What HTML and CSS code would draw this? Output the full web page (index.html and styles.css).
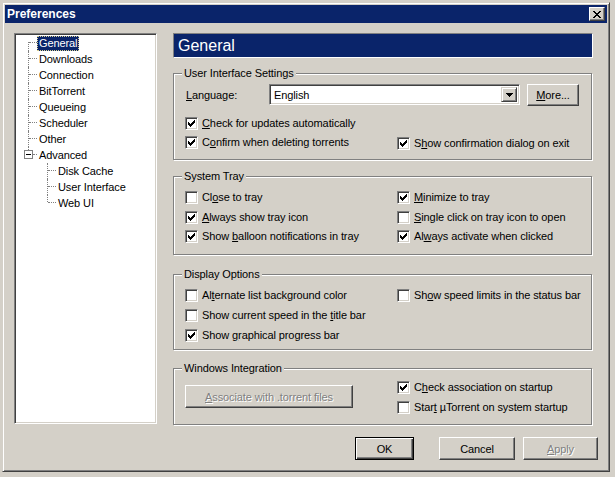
FILE: index.html
```html
<!DOCTYPE html>
<html>
<head>
<meta charset="utf-8">
<title>Preferences</title>
<link rel="stylesheet" href="styles.css">
</head>
<body>
<svg class="defs" aria-hidden="true">
  <defs>
    <symbol id="chk" viewBox="0 0 7 7"><path d="M6 0h1v1h-1z M5 1h2v1h-2z M0 2h1v1h-1z M4 2h3v1h-3z M0 3h2v1h-2z M3 3h3v1h-3z M0 4h5v1h-5z M1 5h3v1h-3z M2 6h1v1h-1z"/></symbol>
  </defs>
</svg>
<div class="window">
  <div class="titlebar">
    <span class="title">Preferences</span>
    <span class="close"><svg width="8" height="7" viewBox="0 0 8 7" shape-rendering="crispEdges"><path d="M0 0h2v1h-2z M6 0h2v1h-2z M1 1h2v1h-2z M5 1h2v1h-2z M2 2h4v1h-4z M3 3h2v1h-2z M2 4h4v1h-4z M1 5h2v1h-2z M5 5h2v1h-2z M0 6h2v1h-2z M6 6h2v1h-2z"/></svg></span>
  </div>
  <div class="dlg">
    <div class="main">
      <div class="tree">
        <ul>
          <li class="root first sel"><span class="lbl">General</span></li>
          <li class="root"><span class="lbl">Downloads</span></li>
          <li class="root"><span class="lbl">Connection</span></li>
          <li class="root"><span class="lbl">BitTorrent</span></li>
          <li class="root"><span class="lbl">Queueing</span></li>
          <li class="root"><span class="lbl">Scheduler</span></li>
          <li class="root"><span class="lbl">Other</span></li>
          <li class="root last adv"><span class="expander"><span class="minus"></span></span><span class="lbl">Advanced</span></li>
          <li class="child"><span class="lbl">Disk Cache</span></li>
          <li class="child"><span class="lbl">User Interface</span></li>
          <li class="child last"><span class="lbl">Web UI</span></li>
        </ul>
      </div>
      <div class="pane">
        <div class="header">General</div>

        <div class="group g1">
          <div class="legend">User Interface Settings</div>
          <div class="lang-row">
            <span class="lang-label"><u>L</u>anguage:</span>
            <div class="combo">
              <span class="combo-text">English</span>
              <span class="combo-btn"><svg width="7" height="4" viewBox="0 0 7 4" shape-rendering="crispEdges"><path d="M0 0H7V1H6V2H5V3H4V4H3V3H2V2H1V1H0Z"/></svg></span>
            </div>
            <span class="btn more"><u>M</u>ore...</span>
          </div>
          <div class="opts">
            <label class="opt"><span class="cb"><svg class="ck"><use href="#chk"/></svg></span><span class="t"><u>C</u>heck for updates automatically</span></label>
            <span></span>
            <label class="opt"><span class="cb"><svg class="ck"><use href="#chk"/></svg></span><span class="t">C<u>o</u>nfirm when deleting torrents</span></label>
            <label class="opt nudge"><span class="cb"><svg class="ck"><use href="#chk"/></svg></span><span class="t">S<u>h</u>ow confirmation dialog on exit</span></label>
          </div>
        </div>

        <div class="group g2">
          <div class="legend">System Tray</div>
          <div class="opts">
            <label class="opt"><span class="cb"></span><span class="t">Cl<u>o</u>se to tray</span></label>
            <label class="opt"><span class="cb"><svg class="ck"><use href="#chk"/></svg></span><span class="t"><u>M</u>inimize to tray</span></label>
            <label class="opt"><span class="cb"><svg class="ck"><use href="#chk"/></svg></span><span class="t"><u>A</u>lways show tray icon</span></label>
            <label class="opt"><span class="cb"></span><span class="t"><u>S</u>ingle click on tray icon to open</span></label>
            <label class="opt"><span class="cb"><svg class="ck"><use href="#chk"/></svg></span><span class="t">Show <u>b</u>alloon notifications in tray</span></label>
            <label class="opt"><span class="cb"><svg class="ck"><use href="#chk"/></svg></span><span class="t">Al<u>w</u>ays activate when clicked</span></label>
          </div>
        </div>

        <div class="group g3">
          <div class="legend">Display Options</div>
          <div class="opts">
            <label class="opt"><span class="cb"></span><span class="t">Al<u>t</u>ernate list background color</span></label>
            <label class="opt"><span class="cb"></span><span class="t">Sh<u>o</u>w speed limits in the status bar</span></label>
            <label class="opt"><span class="cb"></span><span class="t">Show current speed in the <u>t</u>itle bar</span></label>
            <span></span>
            <label class="opt"><span class="cb"><svg class="ck"><use href="#chk"/></svg></span><span class="t">Show <u>g</u>raphical progress bar</span></label>
            <span></span>
          </div>
        </div>

        <div class="group g4">
          <div class="legend">Windows Integration</div>
          <div class="opts">
            <div class="assoc-cell"><span class="btn assoc disabled"><u>A</u>ssociate with .torrent files</span></div>
            <div class="stack">
              <label class="opt"><span class="cb"><svg class="ck"><use href="#chk"/></svg></span><span class="t">C<u>h</u>eck association on startup</span></label>
              <label class="opt"><span class="cb"></span><span class="t">Star<u>t</u> µTorrent on system startup</span></label>
            </div>
          </div>
        </div>
      </div>
    </div>
    <div class="buttons">
      <span class="btn default ok">OK</span>
      <span class="btn cancel">Cancel</span>
      <span class="btn apply disabled"><u>A</u>pply</span>
    </div>
  </div>
</div>
</body>
</html>
```
FILE: styles.css
```css
* { box-sizing: border-box; }

html, body {
  margin: 0;
  padding: 0;
  background: #d4d0c8;
}

body {
  font-family: "Liberation Sans", Arial, sans-serif;
  font-size: 11px;
  letter-spacing: -0.1px;
  color: #000;
  width: 615px;
  height: 477px;
  overflow: hidden;
}

.defs {
  position: absolute;
  width: 0;
  height: 0;
  overflow: hidden;
}

u { text-decoration: underline; text-underline-offset: 1px; }

/* window frame */
.window {
  margin: 2px 0 0 2px;
  width: 608px;
  height: 470px;
  border: 1px solid;
  border-color: #d4d0c8 #404040 #404040 #d4d0c8;
  box-shadow: inset 1px 1px 0 #fff, inset -1px -1px 0 #808080;
  padding: 2px;
  background: #d4d0c8;
  display: flex;
  flex-direction: column;
}

.titlebar {
  height: 18px;
  background: #0a246a;
  display: flex;
  align-items: center;
  padding: 0 2px 0 2px;
}

.title {
  color: #fff;
  font-weight: bold;
  font-size: 12px;
  letter-spacing: 0;
}

.close {
  margin-left: auto;
  width: 16px;
  height: 14px;
  background: #d4d0c8;
  border: 1px solid;
  border-color: #fff #404040 #404040 #fff;
  box-shadow: inset -1px -1px 0 #808080;
  display: flex;
  align-items: center;
  justify-content: center;
  padding-right: 1px;
}

.close svg { display: block; fill: #000; }

/* dialog body */
.dlg {
  display: flex;
  flex-direction: column;
  padding: 10px 0 0 9px;
}

.main {
  display: flex;
  align-items: flex-start;
}

/* tree */
.tree {
  width: 143px;
  height: 391px;
  background: #fff;
  border: 1px solid;
  border-color: #808080 #fff #fff #808080;
  box-shadow: inset 1px 1px 0 #404040, inset -1px -1px 0 #d4d0c8;
  padding: 1px;
}

.tree ul {
  list-style: none;
  margin: 0;
  padding: 0;
}

.tree li {
  position: relative;
  height: 16px;
  display: flex;
  align-items: center;
  padding-left: 21px;
  white-space: nowrap;
}

.tree li.child { padding-left: 40px; }

.tree li::before {
  content: "";
  position: absolute;
  left: 13px;
  top: 7px;
  width: 8px;
  border-top: 1px dotted #808080;
}

.tree li::after {
  content: "";
  position: absolute;
  left: 12px;
  top: 0;
  height: 16px;
  border-left: 1px dotted #808080;
}

.tree li.first::after { top: 7px; height: 9px; }
.tree li.last::after { height: 7px; }
.tree li.child::before { left: 32px; }
.tree li.child::after { left: 31px; }
.tree li.adv::before { left: 17px; width: 4px; }

.expander {
  position: absolute;
  left: 8px;
  top: 3px;
  width: 9px;
  height: 9px;
  border: 1px solid #808080;
  background: #fff;
  display: flex;
  align-items: center;
  justify-content: center;
  z-index: 1;
}

.minus {
  width: 5px;
  height: 1px;
  background: #000;
}

.lbl {
  display: inline-block;
  padding: 0 2px 1px;
  line-height: 14px;
}

.sel .lbl {
  background: #0a246a;
  color: #fff;
  outline: 1px dotted #d8d090;
  outline-offset: -1px;
}

/* right pane */
.pane {
  margin-left: 16px;
  width: 420px;
}

.header {
  height: 25px;
  background: #0a246a;
  color: #fff;
  font-size: 16px;
  letter-spacing: 0;
  border: 1px solid;
  border-color: #808080 #fff #fff #808080;
  padding-left: 4px;
  display: flex;
  align-items: center;
}

.group {
  width: 419px;
  border: 1px solid #808080;
  box-shadow: inset 1px 1px 0 #fff, 1px 1px 0 #fff;
}

.legend {
  width: fit-content;
  margin: -7px 0 0 8px;
  padding: 0 2px;
  background: #d4d0c8;
  line-height: 13px;
  white-space: nowrap;
}

.g1 { margin-top: 15px; padding-bottom: 7px; }
.g2 { margin-top: 16px; padding-bottom: 8px; }
.g3 { margin-top: 19px; padding-bottom: 4px; }
.g4 { margin-top: 18px; padding-bottom: 7px; }

.lang-row {
  display: flex;
  align-items: flex-start;
  margin-top: 4px;
  padding-left: 12px;
}

.lang-label {
  width: 83px;
  line-height: 21px;
  padding-top: 1px;
}

.combo {
  width: 251px;
  height: 21px;
  background: #fff;
  border: 1px solid;
  border-color: #808080 #fff #fff #808080;
  box-shadow: inset 1px 1px 0 #404040, inset -1px -1px 0 #d4d0c8;
  padding: 2px;
  display: flex;
  align-items: stretch;
}

.combo-text {
  flex: 1;
  line-height: 17px;
  padding-left: 2px;
}

.combo-btn {
  width: 16px;
  background: #d4d0c8;
  border: 1px solid;
  border-color: #d4d0c8 #404040 #404040 #d4d0c8;
  box-shadow: inset 1px 1px 0 #fff, inset -1px -1px 0 #808080;
  display: flex;
  align-items: center;
  justify-content: center;
}

.combo-btn svg { display: block; fill: #000; }

.btn {
  display: flex;
  align-items: center;
  justify-content: center;
  height: 23px;
  background: #d4d0c8;
  border: 1px solid;
  border-color: #fff #404040 #404040 #fff;
  box-shadow: inset -1px -1px 0 #808080;
  white-space: nowrap;
}

.btn.more {
  margin-left: 7px;
  width: 52px;
  height: 22px;
}

.btn.disabled {
  color: #808080;
  text-shadow: 1px 1px 0 #fff;
}

.btn.default {
  border: 1px solid #000;
  box-shadow: inset 1px 1px 0 #fff, inset -1px -1px 0 #404040, inset -2px -2px 0 #808080;
}

.opts {
  display: grid;
  grid-template-columns: 212px 1fr;
  padding-left: 11px;
}

.g1 .opts { margin-top: 8px; grid-template-rows: 19px 19px; }
.g2 .opts { margin-top: 5px; grid-template-rows: 20px 19px 19px; }
.g3 .opts { margin-top: 5px; grid-template-rows: 20px 20px 19px; }
.g4 .opts { margin-top: 3px; }

.opt {
  display: flex;
  align-items: center;
  height: 19px;
  white-space: nowrap;
}

.opt .t { padding-bottom: 2px; }

.opt.nudge { height: 20px; padding-top: 1px; }

.cb {
  flex: none;
  width: 13px;
  height: 13px;
  margin-right: 4px;
  background: #fff;
  border: 1px solid;
  border-color: #808080 #fff #fff #808080;
  box-shadow: inset 1px 1px 0 #404040, inset -1px -1px 0 #d4d0c8;
  padding: 2px;
}

.ck {
  display: block;
  width: 7px;
  height: 7px;
  fill: #000;
  shape-rendering: crispEdges;
}

.assoc-cell { padding-top: 7px; }

.btn.assoc { width: 168px; }

.stack {
  display: flex;
  flex-direction: column;
  gap: 1px;
}

/* bottom buttons */
.buttons {
  display: flex;
  justify-content: flex-end;
  margin-top: 12px;
  padding-right: 9px;
}

.ok { width: 59px; }
.cancel { width: 76px; margin-left: 25px; }
.apply { width: 75px; margin-left: 8px; }
```
